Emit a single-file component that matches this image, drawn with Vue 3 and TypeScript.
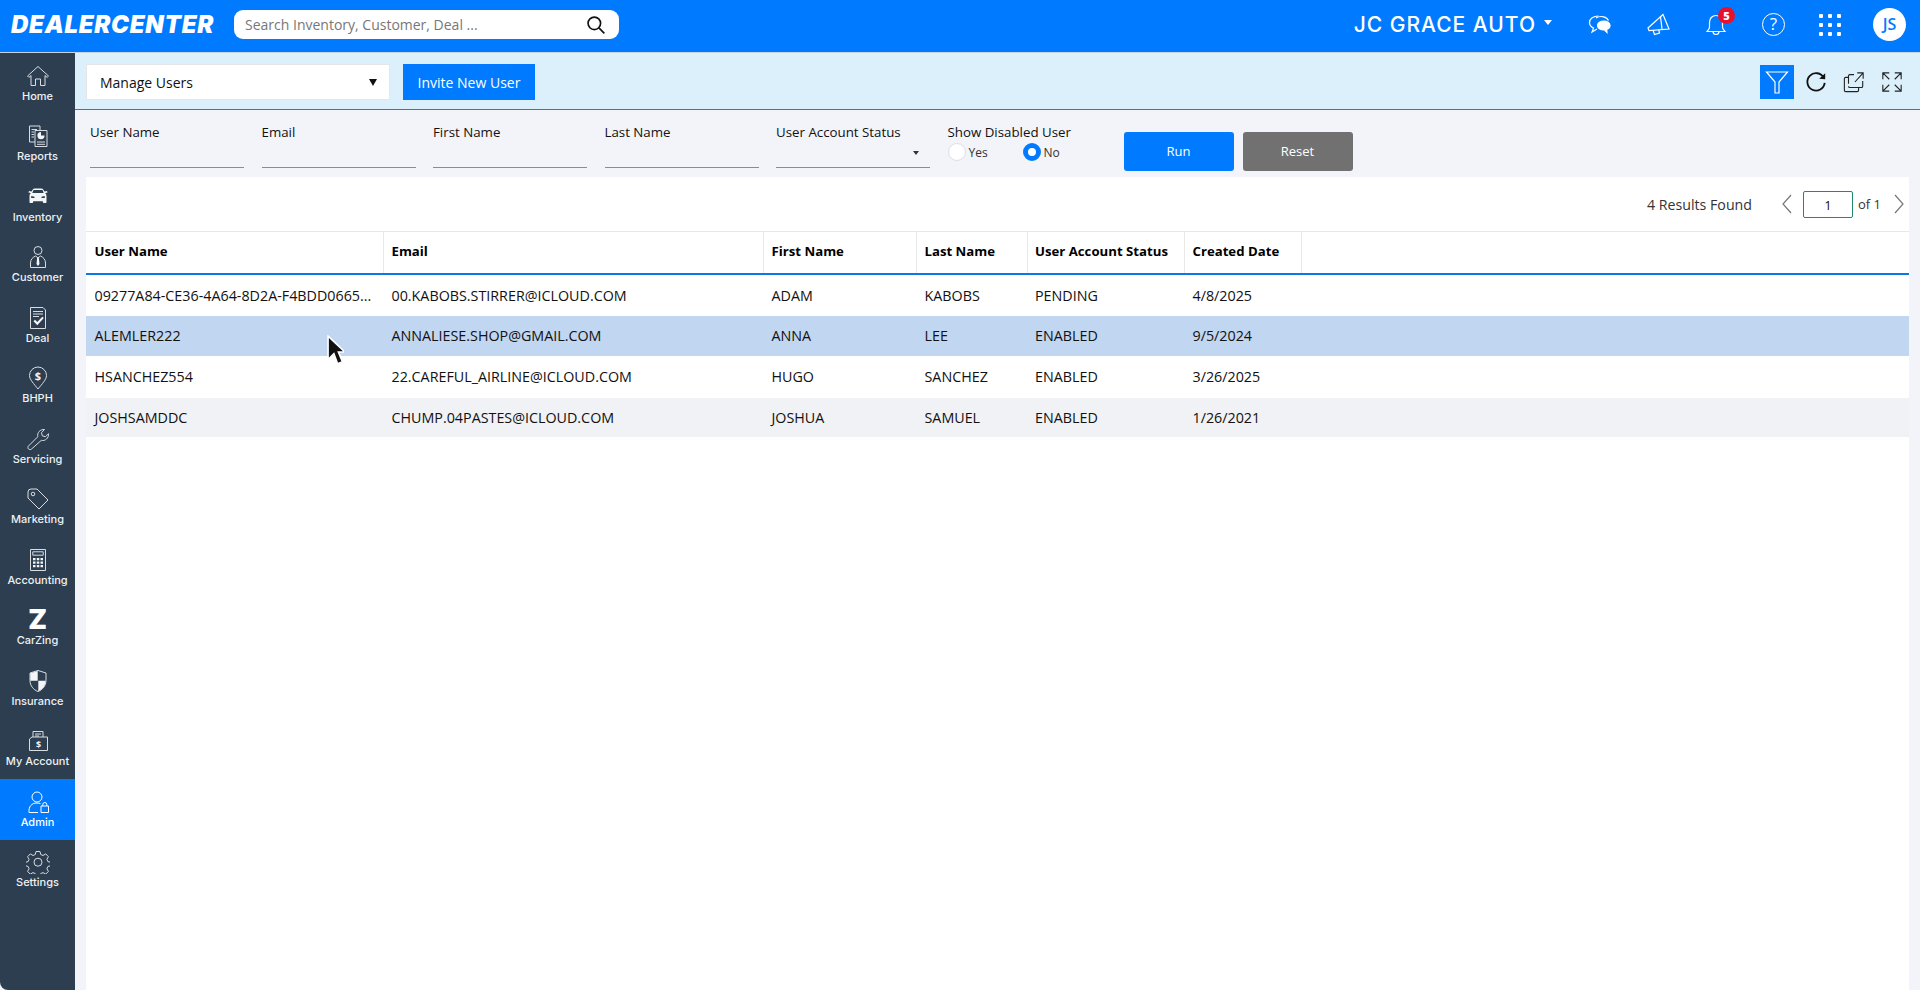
<script setup lang="ts">
interface NavItem {
  label: string;
  strokes?: string[];
  fills?: string[];
  glyph?: { text: string; x: number; y: number; size: number };
  mark?: string;
  active?: boolean;
}

interface UserRow {
  userName: string;
  email: string;
  firstName: string;
  lastName: string;
  status: string;
  created: string;
}

const navItems: NavItem[] = [
  {
    label: 'Home',
    strokes: ['M1.500 12 12 2.500 22.500 12l-1.400 1.400L19 11.500V21.500h-4.500V15h-5v6.500H5V11.500l-2.100 1.900z'],
  },
  {
    label: 'Reports',
    strokes: [
      'M9 18H3.500V2H14v4',
      'M9 6.500h12v16H9z',
      'M5.500 5.500H11M5.500 8H8M5.500 10.500H8M5.500 13H8',
      'M11 18h8M11 20.300h8',
    ],
    fills: ['M15 8a3.600 3.600 0 1 0 3.600 3.600H15z'],
  },
  {
    label: 'Inventory',
    fills: [
      'M5.500 6.500 6.800 4.400C7.200 3.700 7.900 3.400 8.700 3.400h6.600c.8 0 1.500.3 1.900 1L18.500 6.500 21 6l.6 1.400-2.400.7c.8.8 1.300 1.800 1.300 3v5.900c0 .6-.4 1-1 1h-1.600c-.6 0-1-.4-1-1V16.300H7.100V17c0 .6-.4 1-1 1H4.500c-.6 0-1-.4-1-1v-5.900c0-1.200.5-2.200 1.300-3L2.400 7.400 3 6zM7.500 5 6.300 8h11.400L16.500 5zM5.200 11v2h3.300v-1.200zM18.800 11l-3.300.8V13h3.300z',
    ],
  },
  {
    label: 'Customer',
    strokes: ['M12 1.500a4 4 0 1 1 0 8 4 4 0 0 1 0-8z', 'M4.500 22.500V18c0-3.600 2.300-5.800 5-7l2.500 1.800 2.500-1.800c2.700 1.200 5 3.400 5 7v4.500z'],
    fills: ['M11.200 12.500h1.600l.7 6.500-1.500 2-1.500-2z'],
  },
  {
    label: 'Deal',
    strokes: ['M4.500 1.500H17l2.500 2.500v18.500h-15z', 'M7 5.500h10M7 8h10M7 10.500h6'],
    fills: ['M7.500 15.200l1.500-1.500 2.300 2.400 5-5.400 1.500 1.400-6.500 7.200z'],
  },
  {
    label: 'BHPH',
    strokes: ['M12 23C8 18 3.500 13.500 3.500 9.500a8.500 8.500 0 0 1 17 0C20.500 13.500 16 18 12 23z'],
    glyph: { text: '$', x: 12, y: 13.500, size: 11 },
  },
  {
    label: 'Servicing',
    strokes: ['M2.500 19l9.300-9.300c-.9-3.800 2.200-7.600 6.700-7.200l-3 3.200.8 3.200 3.200.8 3-3c.5 4.400-3.400 7.600-7.200 6.700L5.500 22c-.8.800-2.200.800-3 0s-.8-2.200 0-3z'],
  },
  {
    label: 'Marketing',
    strokes: ['M2 5a3 3 0 0 1 3-3h6l11 11-9 9L2 11z', 'M7 5.200a1.800 1.800 0 1 1 0 3.600 1.800 1.800 0 0 1 0-3.600z'],
  },
  {
    label: 'Accounting',
    strokes: ['M4.500 1.500h15v21h-15z', 'M6.800 3.800h10.400v3.400H6.800z'],
    fills: [
      'M7 10h2.500v2.200H7zM10.800 10h2.500v2.200h-2.500zM14.500 10H17v2.200h-2.500z',
      'M7 13.500h2.500v2.200H7zM10.800 13.500h2.500v2.200h-2.500zM14.500 13.500H17v2.200h-2.500z',
      'M7 17h2.500v2.200H7zM10.800 17h2.500v2.200h-2.500zM14.500 17H17v2.200h-2.500z',
    ],
  },
  { label: 'CarZing', mark: 'Z' },
  {
    label: 'Insurance',
    strokes: ['M12 1.500 4 4v7.500c0 5 3.300 9.300 8 11 4.700-1.700 8-6 8-11V4z'],
    fills: ['M11.700 2 4.300 4.300v7.400h7.400zM12.300 11.700v10.500c4.200-1.700 7.200-5.600 7.400-10.500z'],
  },
  {
    label: 'My Account',
    strokes: ['M7 8V2.500h10V8', 'M9 5h6M9 7h4', 'M3.500 10 6 8h15.500v13.500H3.500z'],
    glyph: { text: '$', x: 12.500, y: 18.500, size: 9 },
  },
  {
    label: 'Admin',
    active: true,
    strokes: ['M11 2a5 5 0 1 1 0 10 5 5 0 0 1 0-10z', 'M12 22.500H3c-.5-6 2.500-9.500 8-9.500 1.300 0 2.500.2 3.500.6', 'M15 16h7.500v6.500H15z', 'M16.800 16v-1.500a2 2 0 0 1 4 0V16'],
  },
  {
    label: 'Settings',
    strokes: [
      'M10 1.500h4l.7 3 2.300 1 2.700-1.600 2.700 2.800-1.500 2.600 1 2.300 2.600.7v3.400l-2.600.8-1 2.300 1.500 2.600-2.700 2.700-2.700-1.500-2.300 1-.7 2.900h-4l-.7-2.900-2.300-1-2.700 1.500-2.700-2.700 1.500-2.600-1-2.300-2.600-.8v-3.400l2.600-.7 1-2.300-1.500-2.600 2.700-2.800L7 5.500l2.300-1z',
      'M12 8.200a4 4 0 1 1 0 8 4 4 0 0 1 0-8z',
    ],
  },
];

const filterFields = ['User Name', 'Email', 'First Name', 'Last Name'];

const columns = ['User Name', 'Email', 'First Name', 'Last Name', 'User Account Status', 'Created Date'];

const users: UserRow[] = [
  {
    userName: '09277A84-CE36-4A64-8D2A-F4BDD0665...',
    email: '00.KABOBS.STIRRER@ICLOUD.COM',
    firstName: 'ADAM',
    lastName: 'KABOBS',
    status: 'PENDING',
    created: '4/8/2025',
  },
  {
    userName: 'ALEMLER222',
    email: 'ANNALIESE.SHOP@GMAIL.COM',
    firstName: 'ANNA',
    lastName: 'LEE',
    status: 'ENABLED',
    created: '9/5/2024',
  },
  {
    userName: 'HSANCHEZ554',
    email: '22.CAREFUL_AIRLINE@ICLOUD.COM',
    firstName: 'HUGO',
    lastName: 'SANCHEZ',
    status: 'ENABLED',
    created: '3/26/2025',
  },
  {
    userName: 'JOSHSAMDDC',
    email: 'CHUMP.04PASTES@ICLOUD.COM',
    firstName: 'JOSHUA',
    lastName: 'SAMUEL',
    status: 'ENABLED',
    created: '1/26/2021',
  },
];
</script>

<template>
  <div class="app">
    <header class="topbar">
      <div class="logo">DEALERCENTER</div>
      <div class="search">
        <span class="search-text">Search Inventory, Customer, Deal ...</span>
        <svg class="search-icon" viewBox="0 0 24 24">
          <circle cx="10" cy="10" r="7.500" />
          <path d="M15.500 15.500 22 22" />
        </svg>
      </div>
      <div class="dealer">
        <span>JC GRACE AUTO</span>
        <i class="dealer-caret"></i>
      </div>
      <div class="top-icons">
        <svg class="top-icon" viewBox="0 0 24 24">
          <path d="M10.500 3C5.500 3 1.500 5.800 1.500 9.500c0 2.500 1.700 4.500 4 5.600L4 19l5-3" />
          <path d="M8 5c5-3 11-1 12.500 2.500" />
          <path class="solid" d="M16 8c-3.600 0-6.500 1.900-6.500 4.500 0 2.500 2.900 4.500 6.500 4.500h.5l2.500 2.500-.3-3c2-.8 3.300-2.300 3.300-4 0-2.600-2.900-4.500-6-4.500z" />
        </svg>
        <svg class="top-icon" viewBox="0 0 24 24">
          <path d="M17 1.500 2 15l1 2.500L23 16z" />
          <path d="M7 17l1.500 4.500 5-1.500-.8-3.300" />
          <path d="M14.500 3.500 16 16" />
        </svg>
        <div class="bell">
          <svg class="top-icon" viewBox="0 0 24 24">
            <path d="M12 2.500c-4 0-6.500 3-6.500 7V14c0 2-1.300 3-2.500 4.500h18c-1.200-1.500-2.500-2.500-2.500-4.500V9.500c0-4-2.500-7-6.500-7z" />
            <path d="M9 18.500c0 1.800 1.300 3 3 3s3-1.200 3-3" />
          </svg>
          <span class="badge">5</span>
        </div>
        <div class="help">?</div>
        <div class="apps">
          <i v-for="n in 9" :key="n"></i>
        </div>
        <div class="avatar">JS</div>
      </div>
    </header>

    <div class="body">
      <nav class="sidebar">
        <a v-for="item in navItems" :key="item.label" class="nav-item" :class="{ active: item.active }">
          <span v-if="item.mark" class="nav-mark">{{ item.mark }}</span>
          <svg v-else class="nav-icon" viewBox="0 0 24 24">
            <path v-for="d in item.strokes" :key="d" :d="d" class="nav-stroke" />
            <path v-for="d in item.fills" :key="d" :d="d" class="nav-fill" />
            <text v-if="item.glyph" class="nav-glyph" :x="item.glyph.x" :y="item.glyph.y" :font-size="item.glyph.size">
              {{ item.glyph.text }}
            </text>
          </svg>
          <span class="nav-label">{{ item.label }}</span>
        </a>
      </nav>

      <main class="main">
        <div class="subbar">
          <div class="page-select">
            <span>Manage Users</span>
            <i class="select-caret"></i>
          </div>
          <button class="invite-btn">Invite New User</button>
          <div class="tools">
            <button class="tool-filter">
              <svg viewBox="0 0 24 24"><path d="M1.500 2h21l-8.500 10v11h-4V12z" /></svg>
            </button>
            <svg class="tool-icon tool-refresh" viewBox="0 0 24 24">
              <path d="M20.500 7.500A9.500 9.500 0 1 0 21.500 13" />
              <path class="solid-dark" d="M15.500 8.500 22 9V2.500z" />
            </svg>
            <svg class="tool-icon" viewBox="0 0 24 24">
              <path d="M6 7H3c-.8 0-1.500.7-1.500 1.500v12.500c0 .8.700 1.500 1.500 1.500h12.500c.8 0 1.500-.7 1.500-1.500V18" />
              <path d="M6 14V5.500C6 4.700 6.700 4 7.500 4H12" />
              <path d="M21.500 11v5.500c0 .8-.7 1.500-1.500 1.500H7.500C6.700 18 6 17.300 6 16.500" />
              <path d="M13 12 22 2M15.500 2H22V8.500" />
            </svg>
            <svg class="tool-icon" viewBox="0 0 24 24">
              <path d="M2 9V2h7M2 2l7 7M15 2h7v7M22 2l-7 7M2 15v7h7M2 22l7-7M22 15v7h-7M22 22l-7-7" />
            </svg>
          </div>
        </div>

        <div class="filters">
          <label v-for="field in filterFields" :key="field" class="field">
            <span class="field-label">{{ field }}</span>
            <span class="field-line"></span>
          </label>
          <label class="field">
            <span class="field-label">User Account Status</span>
            <span class="field-line"><i class="status-caret"></i></span>
          </label>
          <div class="disabled-field">
            <span class="field-label">Show Disabled User</span>
            <div class="radios">
              <span class="radio"><i class="radio-dot"></i>Yes</span>
              <span class="radio"><i class="radio-dot on"></i>No</span>
            </div>
          </div>
          <button class="action-btn run">Run</button>
          <button class="action-btn reset">Reset</button>
        </div>

        <section class="panel">
          <div class="pager">
            <span class="pager-count">4 Results Found</span>
            <svg class="pager-arrow" viewBox="0 0 12 20"><path d="M10 1 2 10l8 9" /></svg>
            <span class="pager-input">1</span>
            <span class="pager-of">of 1</span>
            <svg class="pager-arrow next" viewBox="0 0 12 20"><path d="M2 1l8 9-8 9" /></svg>
          </div>

          <div class="grid-head grid-row">
            <div v-for="col in columns" :key="col" class="head-cell">{{ col }}</div>
          </div>
          <div v-for="row in users" :key="row.userName" class="grid-row data-row">
            <div class="cell">{{ row.userName }}</div>
            <div class="cell">{{ row.email }}</div>
            <div class="cell">{{ row.firstName }}</div>
            <div class="cell">{{ row.lastName }}</div>
            <div class="cell">{{ row.status }}</div>
            <div class="cell">{{ row.created }}</div>
          </div>

          <!-- mouse pointer captured with the screen -->
          <svg class="cursor" viewBox="0 0 16 30">
            <path d="M1 1v22l5.500-5.500L10 27l4.500-2-3.800-9H17z" />
          </svg>
        </section>
      </main>
    </div>
  </div>
</template>

<style scoped>
.app {
  display: flex;
  flex-direction: column;
  height: 990px;
  overflow: hidden;
  background: #f2f4f9;
  font-family: "Open Sans", "Noto Sans", sans-serif;
  color: #111;
}

.topbar {
  display: flex;
  align-items: center;
  flex: 0 0 53px;
  box-sizing: border-box;
  background: #007bff;
  border-bottom: 1px solid #c9d3dd;
  padding-left: 11px;
}
.logo {
  width: 223px;
  font-family: Inter, sans-serif;
  font-style: italic;
  font-weight: 900;
  font-size: 24px;
  letter-spacing: 0.7px;
  margin-bottom: 3px;
  color: #fff;
}
.search {
  display: flex;
  align-items: center;
  justify-content: space-between;
  box-sizing: border-box;
  width: 385px;
  height: 29px;
  margin-bottom: 3px;
  padding: 0 13px 0 11px;
  background: #fff;
  border-radius: 9px;
}
.search-text {
  font-size: 14px;
  color: #777;
}
.search-icon {
  width: 20px;
  height: 20px;
  fill: none;
  stroke: #111;
  stroke-width: 2;
}
.dealer {
  display: flex;
  align-items: center;
  margin-left: auto;
  color: #fff;
  font-family: Inter, sans-serif;
  font-weight: 500;
  font-size: 21px;
  letter-spacing: 1px;
  margin-bottom: 3px;
}
.dealer-caret {
  width: 0;
  height: 0;
  margin: 0 0 4px 8px;
  border-left: 4.500px solid transparent;
  border-right: 4.500px solid transparent;
  border-top: 5px solid #fff;
}
.top-icons {
  display: flex;
  align-items: center;
  margin-bottom: 3px;
  padding-right: 14px;
  padding-left: 36px;
}
.top-icon {
  display: block;
  width: 24px;
  height: 24px;
  fill: none;
  stroke: #fff;
  stroke-width: 1.200;
}
.top-icon .solid {
  fill: #fff;
}
.top-icons > * {
  margin-right: 34px;
}
.top-icons > :last-child {
  margin-right: 0;
}
.bell {
  position: relative;
}
.badge {
  position: absolute;
  top: -6px;
  right: -7px;
  width: 17px;
  height: 17px;
  border-radius: 50%;
  background: #e8112d;
  color: #fff;
  font-size: 11px;
  font-weight: 800;
  line-height: 17px;
  text-align: center;
}
.help {
  box-sizing: border-box;
  width: 23px;
  height: 23px;
  border: 1.200px solid #fff;
  border-radius: 50%;
  color: #fff;
  font-size: 17px;
  font-weight: 500;
  line-height: 20px;
  text-align: center;
}
.apps {
  display: grid;
  grid-template-columns: repeat(3, 4px);
  gap: 5px;
  margin-right: 32px;
}
.apps i {
  width: 4px;
  height: 4px;
  background: #fff;
  border-radius: 1px;
}
.avatar {
  width: 33px;
  height: 33px;
  border-radius: 50%;
  background: #fff;
  color: #007bff;
  font-size: 16px;
  font-weight: 600;
  line-height: 33px;
  text-align: center;
}

.body {
  display: flex;
  flex: 1;
  min-height: 0;
}
.sidebar {
  flex: 0 0 75px;
  background: #2c3e50;
  border-bottom-left-radius: 8px;
}
.nav-item {
  display: flex;
  flex-direction: column;
  align-items: center;
  justify-content: flex-start;
  box-sizing: border-box;
  height: 60.500px;
  padding-top: 10.500px;
  color: #eef1f4;
}
.nav-item.active {
  background: #007bff;
  color: #fff;
}
.nav-icon {
  display: block;
  width: 24px;
  height: 24px;
  flex: none;
}
.nav-stroke {
  fill: none;
  stroke: #d9dde2;
  stroke-width: 1;
}
.nav-fill {
  fill: #f4f5f7;
  fill-rule: evenodd;
}
.active .nav-stroke {
  stroke: #fff;
}
.nav-glyph {
  fill: #eef1f4;
  font-family: "Open Sans", sans-serif;
  font-weight: 700;
  text-anchor: middle;
}
.nav-mark {
  height: 24px;
  font-family: Inter, sans-serif;
  font-weight: 900;
  font-size: 27px;
  line-height: 24px;
  color: #fff;
}
.nav-label {
  margin-top: 2px;
  font-family: Inter, sans-serif;
  font-size: 11px;
  font-weight: 500;
  line-height: 13px;
  white-space: nowrap;
}

.main {
  display: flex;
  flex-direction: column;
  flex: 1;
  min-width: 0;
}
.subbar {
  display: flex;
  align-items: center;
  flex: 0 0 57px;
  box-sizing: border-box;
  padding: 2px 17px 0 11px;
  background: #dcf0fc;
  border-bottom: 1px solid #1c7fe0;
}
.page-select {
  display: flex;
  align-items: center;
  justify-content: space-between;
  box-sizing: border-box;
  width: 304px;
  height: 36px;
  padding: 0 12px 0 13px;
  background: #fff;
  border: 1px solid #e4e6e8;
  font-size: 14px;
}
.select-caret {
  width: 0;
  height: 0;
  border-left: 4.500px solid transparent;
  border-right: 4.500px solid transparent;
  border-top: 7px solid #111;
}
.invite-btn {
  width: 132px;
  height: 36px;
  margin-left: 13px;
  border: 0;
  background: #007bff;
  color: #fff;
  font-family: inherit;
  font-size: 14px;
  font-weight: 500;
}
.tools {
  display: flex;
  align-items: center;
  margin-top: -1px;
  margin-left: auto;
}
.tool-filter {
  display: flex;
  align-items: center;
  justify-content: center;
  width: 34px;
  height: 34px;
  padding: 0;
  border: 0;
  background: #007bff;
}
.tool-filter svg {
  width: 24px;
  height: 24px;
  fill: none;
  stroke: #fff;
  stroke-width: 1.200;
}
.tool-icon {
  width: 22px;
  height: 22px;
  margin-left: 16px;
  fill: none;
  stroke: #222;
  stroke-width: 1.200;
}
.tool-refresh {
  margin-left: 11px;
  stroke-width: 2;
  stroke: #111;
}
.solid-dark {
  fill: #111;
  stroke: none;
}

.filters {
  display: flex;
  align-items: flex-start;
  flex: 0 0 67px;
  box-sizing: border-box;
  padding: 13px 0 0 15px;
}
.field {
  display: flex;
  flex-direction: column;
  width: 154px;
  margin-right: 17.500px;
}
.field-label {
  display: block;
  font-size: 13.300px;
  line-height: 18px;
  white-space: nowrap;
}
.field-line {
  position: relative;
  display: block;
  height: 26px;
  border-bottom: 1px solid #8c8c8c;
}
.status-caret {
  position: absolute;
  right: 11px;
  top: 10px;
  width: 0;
  height: 0;
  border-left: 3px solid transparent;
  border-right: 3px solid transparent;
  border-top: 4px solid #333;
}
.disabled-field {
  width: 176px;
}
.radios {
  display: flex;
  margin-top: 2px;
  font-size: 12px;
  color: #333;
}
.radio {
  display: flex;
  align-items: center;
  gap: 3px;
  width: 75px;
  height: 18px;
}
.radio-dot {
  box-sizing: border-box;
  width: 18px;
  height: 18px;
  border-radius: 50%;
  background: #fff;
  border: 1px solid #dcdfe4;
}
.radio-dot.on {
  border: 5px solid #007bff;
}
.action-btn {
  width: 110px;
  height: 39px;
  margin: 9px 9px 0 0;
  padding-bottom: 2px;
  border: 0;
  border-radius: 3px;
  color: #fff;
  font-family: inherit;
  font-size: 13px;
  font-weight: 500;
}
.run {
  background: #007bff;
}
.reset {
  background: #717171;
}

.panel {
  position: relative;
  flex: 1;
  margin: 0 11px;
  background: #fff;
}
.pager {
  display: flex;
  align-items: center;
  justify-content: flex-end;
  box-sizing: border-box;
  height: 54px;
  padding: 0 4px 0 0;
  font-size: 13px;
  color: #333;
}
.pager-count {
  margin-right: 29px;
  font-size: 14.200px;
}
.pager-arrow {
  width: 12px;
  height: 20px;
  fill: none;
  stroke: #777;
  stroke-width: 1.200;
}
.pager-input {
  box-sizing: border-box;
  width: 50px;
  height: 27px;
  margin: 0 5px 0 10px;
  border: 1px solid #1e8a6e;
  border-radius: 2px;
  color: #111;
  line-height: 26px;
  text-align: center;
}
.pager-arrow.next {
  margin-left: 12px;
}
.grid-row {
  display: grid;
  grid-template-columns: 298px 380px 153px 110.500px 157.500px 117px;
}
.grid-head {
  box-sizing: border-box;
  height: 44px;
  border-top: 1px solid #e8e8e8;
  border-bottom: 2px solid #0a78e8;
}
.head-cell {
  box-sizing: border-box;
  padding-left: 7.500px;
  border-right: 1px solid #e8e8e8;
  font-size: 13.200px;
  font-weight: 700;
  line-height: 38px;
  color: #000;
}
.head-cell:first-child {
  padding-left: 8.500px;
}
.data-row {
  height: 41px;
  align-items: center;
}
.data-row:nth-of-type(4) {
  height: 40px;
  padding-bottom: 1px;
  box-sizing: border-box;
  background: #c1d6f0;
}
.data-row:nth-of-type(5) {
  height: 42px;
  padding-bottom: 1px;
  box-sizing: border-box;
}
.data-row:nth-of-type(6) {
  height: 39px;
  background: #f0f2f5;
}
.cell {
  padding-left: 7.500px;
  font-size: 14.300px;
  color: #111;
  white-space: nowrap;
}
.cell:first-child {
  padding-left: 8.500px;
}
.cursor {
  position: absolute;
  left: 241px;
  top: 158px;
  width: 17px;
  height: 32px;
  fill: #111;
  stroke: #fff;
  stroke-width: 1.500;
}
</style>

<style>
body {
  background: #f2f4f9;
}
</style>
